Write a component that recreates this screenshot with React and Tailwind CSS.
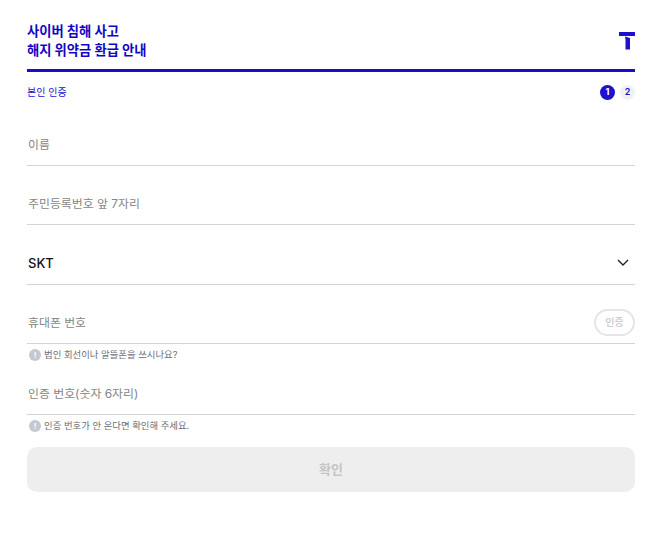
import React from 'react';

const FONT = "font-['Inter','Noto_Sans_CJK_KR',sans-serif]";

function Logo() {
  return (
    <svg width="16" height="18" viewBox="0 0 16 18" className="block">
      <path d="M0 0h16v4H0z" fill="#1f0fd0" />
      <path d="M6 4.500l5 1.500V17.500H6.500V8z" fill="#1f0fd0" />
    </svg>
  );
}

function Hint({ children }) {
  return (
    <div className="flex items-center gap-[3px] h-[21px] pl-[2px]">
      <span className="flex w-[12px] h-[12px] items-center justify-center rounded-full bg-[#c5c8d0] text-[8px] font-bold leading-none text-white">!</span>
      <span className="text-[9.4px] leading-none text-[#6b6f78]">{children}</span>
    </div>
  );
}

function Field({ label, right, className }) {
  return (
    <div className={`flex items-center justify-between border-b border-[#d4d4d8] ${className}`}>
      <span className="pl-px pt-[2px] text-[11.9px] text-[#858585]">{label}</span>
      {right}
    </div>
  );
}

export default function App() {
  return (
    <div className={`${FONT} h-[537px] bg-white pl-[27px] pr-[23px] pt-[22px]`}>
      <header className="flex items-start justify-between h-[47px]">
        <h1 className="text-[13.3px] font-bold leading-[19px] text-[#1206c4]">
          사이버 침해 사고<br />해지 위약금 환급 안내
        </h1>
        <div className="mt-[10px]"><Logo /></div>
      </header>
      <div className="h-[3px] bg-[#1a0cc8]" />

      <div className="flex items-center justify-between h-[40px]">
        <span className="text-[10px] text-[#1f0fd0]">본인 인증</span>
        <div className="flex items-center gap-[5px]">
          <span className="flex w-[15px] h-[15px] items-center justify-center rounded-full bg-[#1f0fd0] text-[9px] font-bold text-white">1</span>
          <span className="flex w-[15px] h-[15px] items-center justify-center rounded-full bg-[#f1f1f5] text-[9px] font-semibold text-[#1f0fd0]">2</span>
        </div>
      </div>

      <Field label="이름" className="h-[43px] mt-[11px]" />
      <Field label="주민등록번호 앞 7자리" className="h-[43px] mt-[16px]" />
      <div className="flex items-center justify-between h-[44px] mt-[16px] border-b border-[#d4d4d8] pr-[6px]">
        <span className="pl-px pt-[2px] text-[13px] font-medium text-[#111]">SKT</span>
        <svg width="12" height="8" viewBox="0 0 12 8" fill="none" stroke="#222" strokeWidth="1.4"><path d="M1 1l5 5 5-5" /></svg>
      </div>
      <Field
        label="휴대폰 번호"
        className="h-[43px] mt-[16px]"
        right={<span className="flex w-[41px] h-[27px] items-center justify-center rounded-full border-2 border-[#e4e4ea] text-[10px] font-medium text-[#c8c8cc]">인증</span>}
      />
      <Hint>법인 회선이나 알뜰폰을 쓰시나요?</Hint>
      <Field label="인증 번호(숫자 6자리)" className="h-[43px] mt-[7px]" />
      <Hint>인증 번호가 안 온다면 확인해 주세요.</Hint>
      <button className="mt-[11px] w-full h-[45px] rounded-[10px] bg-[#eeeeee] text-[13px] font-semibold text-[#c4c4c4]">확인</button>
    </div>
  );
}
